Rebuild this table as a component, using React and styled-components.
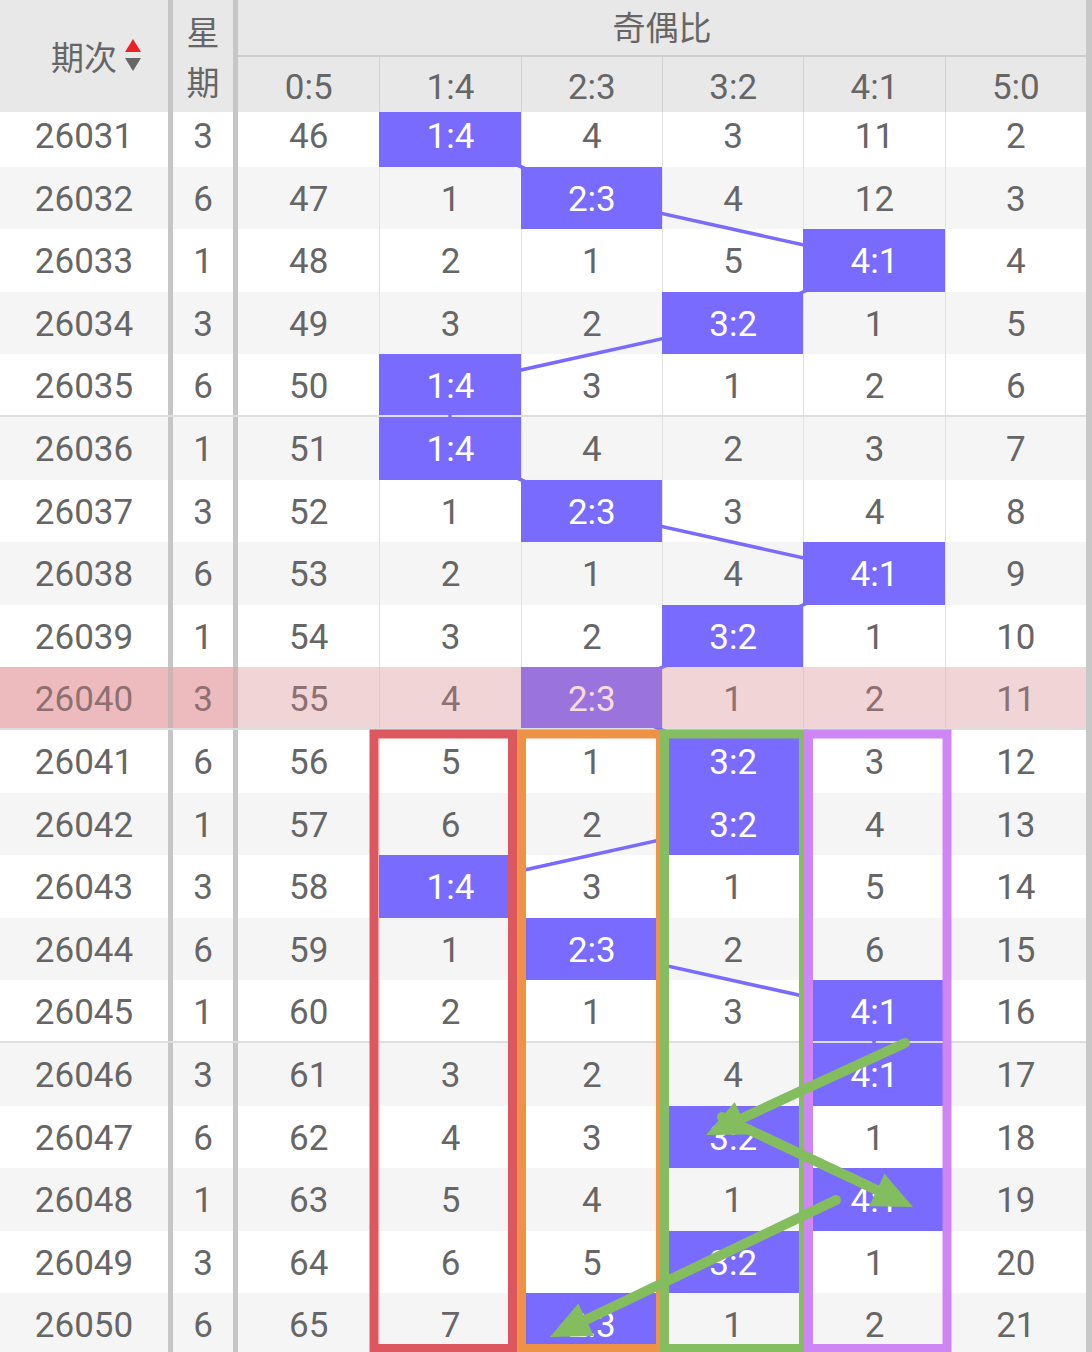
import React from "react";
import styled, { createGlobalStyle, css } from "styled-components";

const RATIOS = ["0:5", "1:4", "2:3", "3:2", "4:1", "5:0"];
const ROW_H = 62.6;
const TOP = 104;
const COL_START = 238;
const COL_W = (1086 - 238) / 6;
const BLUE = "#7a6bff";
const HL_INDEX = 9;

// [期次, 星期, hit column, values]
const rows = [
  ["26031", 3, 1, [46, 0, 4, 3, 11, 2]],
  ["26032", 6, 2, [47, 1, 0, 4, 12, 3]],
  ["26033", 1, 4, [48, 2, 1, 5, 0, 4]],
  ["26034", 3, 3, [49, 3, 2, 0, 1, 5]],
  ["26035", 6, 1, [50, 0, 3, 1, 2, 6]],
  ["26036", 1, 1, [51, 0, 4, 2, 3, 7]],
  ["26037", 3, 2, [52, 1, 0, 3, 4, 8]],
  ["26038", 6, 4, [53, 2, 1, 4, 0, 9]],
  ["26039", 1, 3, [54, 3, 2, 0, 1, 10]],
  ["26040", 3, 2, [55, 4, 0, 1, 2, 11]],
  ["26041", 6, 3, [56, 5, 1, 0, 3, 12]],
  ["26042", 1, 3, [57, 6, 2, 0, 4, 13]],
  ["26043", 3, 1, [58, 0, 3, 1, 5, 14]],
  ["26044", 6, 2, [59, 1, 0, 2, 6, 15]],
  ["26045", 1, 4, [60, 2, 1, 3, 0, 16]],
  ["26046", 3, 4, [61, 3, 2, 4, 0, 17]],
  ["26047", 6, 3, [62, 4, 3, 0, 1, 18]],
  ["26048", 1, 4, [63, 5, 4, 1, 0, 19]],
  ["26049", 3, 3, [64, 6, 5, 0, 1, 20]],
  ["26050", 6, 2, [65, 7, 0, 1, 2, 21]],
];

const GlobalStyle = createGlobalStyle`
  body {
    margin: 0;
    background: #fff;
    font-family: Roboto, "Noto Sans CJK SC", sans-serif;
  }
`;

const Frame = styled.div`
  position: relative;
  width: 1092px;
  height: 1352px;
  overflow: hidden;
  box-sizing: border-box;
  border-right: 6px solid #c8c8c8;
`;

const Header = styled.div`
  position: relative;
  z-index: 10;
  display: grid;
  grid-template-columns: 173px 65px repeat(6, 1fr);
  grid-template-rows: 57px 55px;
  height: 112px;
  background: #e8e8e8;
  color: #666;
  font-family: "Noto Sans CJK SC", sans-serif;
  font-size: 33px;
`;

const HeadCell = styled.div`
  display: flex;
  align-items: center;
  justify-content: center;
  box-sizing: border-box;
  text-align: center;
  ${(p) =>
    p.$tall &&
    css`
      grid-row: 1 / 3;
      border-right: 5px solid #c6c6c6;
      line-height: 50px;
    `}
`;

const GroupTitle = styled(HeadCell)`
  grid-column: 3 / 9;
  border-bottom: 2px solid #cdcdcd;
  padding-bottom: 4px;
`;

const RatioHead = styled(HeadCell)`
  font-family: Roboto, sans-serif;
  font-size: 35px;
  padding-top: 5px;
  border-left: ${(p) => (p.$first ? "none" : "1px solid #d2d2d2")};
`;

const SortIcon = styled.svg`
  width: 18px;
  height: 34px;
  margin-left: 7px;
  margin-right: -25px;
`;

const Body = styled.div`
  margin-top: -8px;
`;

const Row = styled.div`
  display: grid;
  grid-template-columns: 173px 65px repeat(6, 1fr);
  height: ${ROW_H}px;
  box-sizing: border-box;
  background: ${(p) => (p.$alt ? "#f5f5f5" : "#fff")};
  border-bottom: ${(p) => (p.$sep ? "2px solid #dedede" : "none")};
  ${(p) =>
    p.$hl &&
    css`
      position: relative;
      &::after {
        content: "";
        position: absolute;
        inset: 0;
        z-index: 3;
        background: rgba(232, 136, 143, 0.3);
        pointer-events: none;
      }
    `}
`;

const Cell = styled.div`
  display: flex;
  align-items: center;
  justify-content: center;
  box-sizing: border-box;
  padding-top: 3px;
  font-size: 35px;
  color: #666;
  ${(p) => p.$line && "border-left: 1px solid #e2e2e2;"}
`;

const FixedCell = styled(Cell)`
  border-right: 5px solid #c6c6c6;
  background: ${(p) => (p.$hl ? "#f0d2d3" : "transparent")};
`;

const HitCell = styled(Cell)`
  position: relative;
  z-index: 2;
  background: ${BLUE};
  color: #fff;
  ${(p) => p.$line && `border-left-color: ${BLUE};`}
`;

const Overlay = styled.svg`
  position: absolute;
  top: 0;
  left: 0;
  z-index: ${(p) => p.$z};
  pointer-events: none;
`;

const cx = (k) => COL_START + COL_W * (k + 0.5);
const cy = (i) => TOP + ROW_H * (i + 0.5);

const Arrow = ({ x1, y1, x2, y2 }) => {
  const dx = x2 - x1;
  const dy = y2 - y1;
  const len = Math.hypot(dx, dy);
  const ux = dx / len;
  const uy = dy / len;
  const L = 40;
  const W = 18;
  const bx = x2 - ux * L;
  const by = y2 - uy * L;
  const head = `${x2},${y2} ${bx - uy * W},${by + ux * W} ${bx + uy * W},${by - ux * W}`;
  return (
    <g>
      <line x1={x1} y1={y1} x2={bx + ux * 4} y2={by + uy * 4} stroke="#84bd5e" strokeWidth="10" strokeLinecap="round" />
      <polygon points={head} fill="#84bd5e" />
    </g>
  );
};

const boxes = [
  { x: 374, w: 138.5, color: "#dc585e" },
  { x: 521.5, w: 139, color: "#ee9248" },
  { x: 664.5, w: 139, color: "#85be60" },
  { x: 808.5, w: 138.5, color: "#ce86f4" },
];

export default function App() {
  const trend = rows.map((r, i) => `${cx(r[2])},${cy(i)}`).join(" ");

  return (
    <Frame>
      <GlobalStyle />
      <Header>
        <HeadCell $tall>
          期次
          <SortIcon viewBox="0 0 18 34">
            <polygon points="9,0 17,13 1,13" fill="#ec2027" />
            <polygon points="1,19 17,19 9,32" fill="#666" />
          </SortIcon>
        </HeadCell>
        <HeadCell $tall>星期</HeadCell>
        <GroupTitle>奇偶比</GroupTitle>
        {RATIOS.map((r, k) => (
          <RatioHead key={r} $first={k === 0}>
            {r}
          </RatioHead>
        ))}
      </Header>

      <Body>
        {rows.map(([period, week, hit, values], i) => (
          <Row key={period} $alt={i % 2 === 1} $sep={i % 5 === 4} $hl={i === HL_INDEX}>
            <FixedCell $hl={i === HL_INDEX}>{period}</FixedCell>
            <FixedCell $hl={i === HL_INDEX}>{week}</FixedCell>
            {values.map((v, k) =>
              k === hit ? (
                <HitCell key={k} $line={k > 0}>
                  {RATIOS[k]}
                </HitCell>
              ) : (
                <Cell key={k} $line={k > 0}>
                  {v}
                </Cell>
              )
            )}
          </Row>
        ))}
      </Body>

      <Overlay $z={1} width="1092" height="1352">
        <polyline points={trend} fill="none" stroke={BLUE} strokeWidth="3.5" strokeLinejoin="round" />
      </Overlay>

      <Overlay $z={4} width="1092" height="1352">
        {boxes.map((b) => (
          <rect key={b.color} x={b.x} y={734} width={b.w} height={614.5} fill="none" stroke={b.color} strokeWidth="9" />
        ))}
        <Arrow x1={905} y1={1043} x2={706} y2={1135} />
        <Arrow x1={722} y1={1117} x2={913} y2={1207} />
        <Arrow x1={836} y1={1200} x2={550} y2={1337} />
      </Overlay>
    </Frame>
  );
}
